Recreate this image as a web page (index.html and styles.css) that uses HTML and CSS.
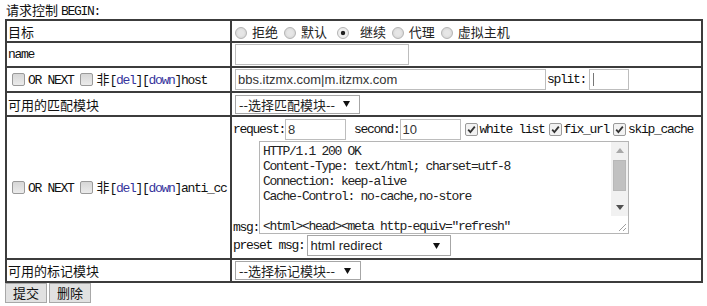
FILE: index.html
```html
<!DOCTYPE html>
<html>
<head>
<meta charset="utf-8">
<link rel="stylesheet" href="styles.css">
</head>
<body>
<div class="title">请求控制 <span class="mono">BEGIN:</span></div>
<form class="form">
<table class="grid">
  <tr class="row-a">
    <td class="label">目标</td>
    <td class="value radios">
      <label class="opt"><input type="radio" name="act">拒绝</label>
      <label class="opt"><input type="radio" name="act">默认</label>
      <label class="opt wide"><input type="radio" name="act" checked>继续</label>
      <label class="opt"><input type="radio" name="act">代理</label>
      <label class="opt"><input type="radio" name="act">虚拟主机</label>
    </td>
  </tr>
  <tr class="row-b">
    <td class="label mono">name</td>
    <td class="value"><input class="txt w-name" type="text"></td>
  </tr>
  <tr class="row-c">
    <td class="label"><span class="flag"><input type="checkbox"><span class="mono">OR NEXT</span> <input type="checkbox">非<span class="mono">[<a class="lnk">del</a>][<a class="lnk">down</a>]host</span></span></td>
    <td class="value"><input class="txt w-host" type="text" value="bbs.itzmx.com|m.itzmx.com"><span class="mono">split:</span><span class="caretbox"><input class="txt w-split" type="text"><span class="caret"></span></span></td>
  </tr>
  <tr class="row-d">
    <td class="label">可用的匹配模块</td>
    <td class="value"><select class="sel w-mod"><option>--选择匹配模块--</option></select></td>
  </tr>
  <tr class="row-e">
    <td class="label"><span class="flag"><input type="checkbox"><span class="mono">OR NEXT</span> <input type="checkbox">非<span class="mono">[<a class="lnk">del</a>][<a class="lnk">down</a>]anti_cc</span></span></td>
    <td class="value cc">
      <div class="line1">
        <span class="mono">request:</span><input class="txt w-num" type="text" value="8">
        <span class="mono sec">second:</span><input class="txt w-num" type="text" value="10">
        <input type="checkbox" checked><span class="mono">white list</span>
        <input type="checkbox" checked><span class="mono">fix_url</span>
        <input type="checkbox" checked><span class="mono">skip_cache</span>
      </div>
      <div class="line2">
        <span class="mono">msg:</span><span class="tawrap"><textarea class="msg">HTTP/1.1 200 OK
Content-Type: text/html; charset=utf-8
Connection: keep-alive
Cache-Control: no-cache,no-store

&lt;html&gt;&lt;head&gt;&lt;meta http-equiv="refresh"
content="0;url=%u"&gt;&lt;/head&gt;&lt;/html&gt;</textarea><span class="vscroll"><span class="sb-btn sb-up"></span><span class="sb-track"><span class="sb-thumb"></span></span><span class="sb-btn sb-down"></span></span><span class="grip"></span></span>
      </div>
      <div class="line3">
        <span class="mono">preset msg:</span><select class="sel w-preset"><option>html redirect</option></select>
      </div>
    </td>
  </tr>
  <tr class="row-f">
    <td class="label">可用的标记模块</td>
    <td class="value"><select class="sel w-mark"><option>--选择标记模块--</option></select></td>
  </tr>
</table>
<div class="actions">
  <button type="button" class="btn">提交</button><button type="button" class="btn">删除</button>
</div>
</form>
</body>
</html>
```
FILE: styles.css
```css
html, body {
  margin: 0;
  padding: 0;
  background: #fff;
}
body {
  padding: 0 4px 0 5px;
  font-family: "Noto Sans CJK SC", "Liberation Sans", sans-serif;
  font-size: 13px;
  line-height: 15px;
  color: #111;
}
.mono {
  font-family: "Liberation Mono", "Noto Sans CJK SC", monospace;
  letter-spacing: -1.3px;
}
.title {
  height: 19px;
  line-height: 19px;
  padding-left: 1px;
}
.form { margin: 0; }
.grid {
  width: 698px;
  border: 1px solid #3c3c3c;
  border-spacing: 0;
  border-collapse: separate;
}
.grid td {
  border: 1px solid #3c3c3c;
  padding: 1px 1px;
  vertical-align: middle;
  white-space: nowrap;
}
.label {
  width: 221px;
}
.row-a td { height: 18px; }
.row-b td { height: 19px; }
.row-c td { height: 21px; }
.row-d td { height: 20px; }
.row-f td { height: 19px; }

.lnk { color: #34349c; text-decoration: none; }

input[type=checkbox] {
  -webkit-appearance: none;
  appearance: none;
  width: 13px;
  height: 13px;
  margin: 0 3px 0 4px;
  border: 1px solid #9a9a9a;
  border-radius: 2px;
  background: linear-gradient(#d6d6d6, #ebebeb);
  vertical-align: -2px;
  box-sizing: border-box;
}
input[type=checkbox]:checked {
  background: #f2f2f2 url("data:image/svg+xml,%3Csvg xmlns='http://www.w3.org/2000/svg' width='11' height='11'%3E%3Cpath d='M2.2 5.6 L4.4 8 L8.8 2.6' fill='none' stroke='%23333' stroke-width='1.8'/%3E%3C/svg%3E") center/11px 11px no-repeat;
}
input[type=radio] {
  -webkit-appearance: none;
  appearance: none;
  width: 12px;
  height: 12px;
  margin: 0 5px 0 4px;
  border: 1px solid #b4b4b4;
  border-radius: 50%;
  background: radial-gradient(circle at 50% 50%, #e6e6e6 0, #e6e6e6 35%, #cfcfcf 100%);
  vertical-align: -2px;
  box-sizing: border-box;
}
input[type=radio]:checked {
  background: radial-gradient(circle at 50% 50%, #222 0, #222 1.8px, #f0f0f0 2.6px, #e8e8e8 100%);
  margin-left: 8px;
  margin-right: 11px;
}
.radios { color: #222; }
.opt { margin-right: -1px; }
.opt:first-child input { margin-left: 2px; }

.txt {
  font-family: "Liberation Sans", Arial, sans-serif;
  font-size: 13px;
  color: #333;
  height: 21px;
  box-sizing: border-box;
  border: 1px solid #bdbdbd;
  padding: 1px 2px;
  margin: 0;
  vertical-align: middle;
  background: #fff;
}
.w-name { width: 174px; margin-left: 2px; }
.w-host { width: 311px; margin-left: 2px; margin-right: 1px; }
.w-split { width: 40px; margin-left: 3px; }
.w-num { width: 61px; margin-left: 0; }
.caretbox { position: relative; display: inline-block; vertical-align: middle; }
.caret {
  position: absolute;
  left: 7px;
  top: 4px;
  width: 1px;
  height: 13px;
  background: #777;
}

.sel {
  -webkit-appearance: none;
  appearance: none;
  font-family: "Noto Sans CJK SC", sans-serif;
  font-size: 13px;
  line-height: 17px;
  color: #222;
  height: 19px;
  box-sizing: border-box;
  border: 1px solid #a6a6a6;
  border-radius: 0;
  padding: 0 0 0 3px;
  margin: 0 0 0 2px;
  vertical-align: top;
  background: #fff url("data:image/svg+xml,%3Csvg xmlns='http://www.w3.org/2000/svg' width='8' height='7'%3E%3Cpath d='M0 0 H8 L4 7 Z' fill='%23111'/%3E%3C/svg%3E") right 9px center/7px 6px no-repeat;
}
.w-mod { width: 125px; }
.w-mark { width: 126px; }
.w-preset {
  width: 144px;
  height: 21px;
  margin-left: 2px;
  font-family: "Liberation Sans", sans-serif;
  background-position: right 10px center;
  vertical-align: middle;
}

.cc { vertical-align: middle; padding: 0 1px; }
.line1 {
  display: flex;
  align-items: center;
  height: 22px;
}
.line1 .sec { margin-left: 8px; }
.line1 input[type=checkbox] { margin: 0 2px 0 4px; }
.line2 {
  display: flex;
  align-items: flex-end;
  height: 94px;
}
.line2 .mono { line-height: 13px; }
.tawrap {
  position: relative;
  display: block;
  height: 93px;
  margin-left: 0;
}
.msg {
  display: block;
  width: 370px;
  height: 93px;
  box-sizing: border-box;
  margin: 0;
  border: 1px solid #b5b5b5;
  padding: 2px 20px 2px 3px;
  font-family: "Liberation Mono", monospace;
  letter-spacing: -1.3px;
  font-size: 13px;
  line-height: 15px;
  color: #222;
  overflow: hidden;
  resize: none;
}
.vscroll {
  position: absolute;
  top: 1px;
  right: 1px;
  width: 17px;
  height: 74px;
  display: flex;
  flex-direction: column;
  background: #f1f1f1;
}
.sb-btn {
  height: 17px;
  flex: none;
  background-repeat: no-repeat;
  background-position: center;
  background-size: 8px 5px;
}
.sb-up {
  background-image: url("data:image/svg+xml,%3Csvg xmlns='http://www.w3.org/2000/svg' width='8' height='5'%3E%3Cpath d='M0 5 H8 L4 0 Z' fill='%23a8a8a8'/%3E%3C/svg%3E");
}
.sb-down {
  background-image: url("data:image/svg+xml,%3Csvg xmlns='http://www.w3.org/2000/svg' width='8' height='5'%3E%3Cpath d='M0 0 H8 L4 5 Z' fill='%23505050'/%3E%3C/svg%3E");
}
.sb-track {
  flex: 1;
  display: flex;
  flex-direction: column;
  padding: 1px 2px 0;
}
.sb-thumb {
  height: 31px;
  background: #c1c1c1;
  border: 1px solid #b8b8b8;
  box-sizing: border-box;
}
.grip {
  position: absolute;
  right: 1px;
  bottom: 1px;
  width: 17px;
  height: 17px;
  background: #fff url("data:image/svg+xml,%3Csvg xmlns='http://www.w3.org/2000/svg' width='17' height='17'%3E%3Cpath d='M15 8 L8 15 M15 12 L12 15' stroke='%23a0a0a0' stroke-width='1'/%3E%3C/svg%3E") center no-repeat;
}
.line3 {
  display: flex;
  align-items: center;
  height: 23px;
}

.actions {
  display: flex;
  gap: 2px;
  margin-top: 0;
}
.btn {
  font-family: "Noto Sans CJK SC", sans-serif;
  font-size: 13px;
  line-height: 15px;
  color: #111;
  background: #e1e1e1;
  border: 1px solid #a8a8a8;
  border-radius: 0;
  padding: 1px 7px 2px;
  height: 20px;
  margin: 0;
}
```
